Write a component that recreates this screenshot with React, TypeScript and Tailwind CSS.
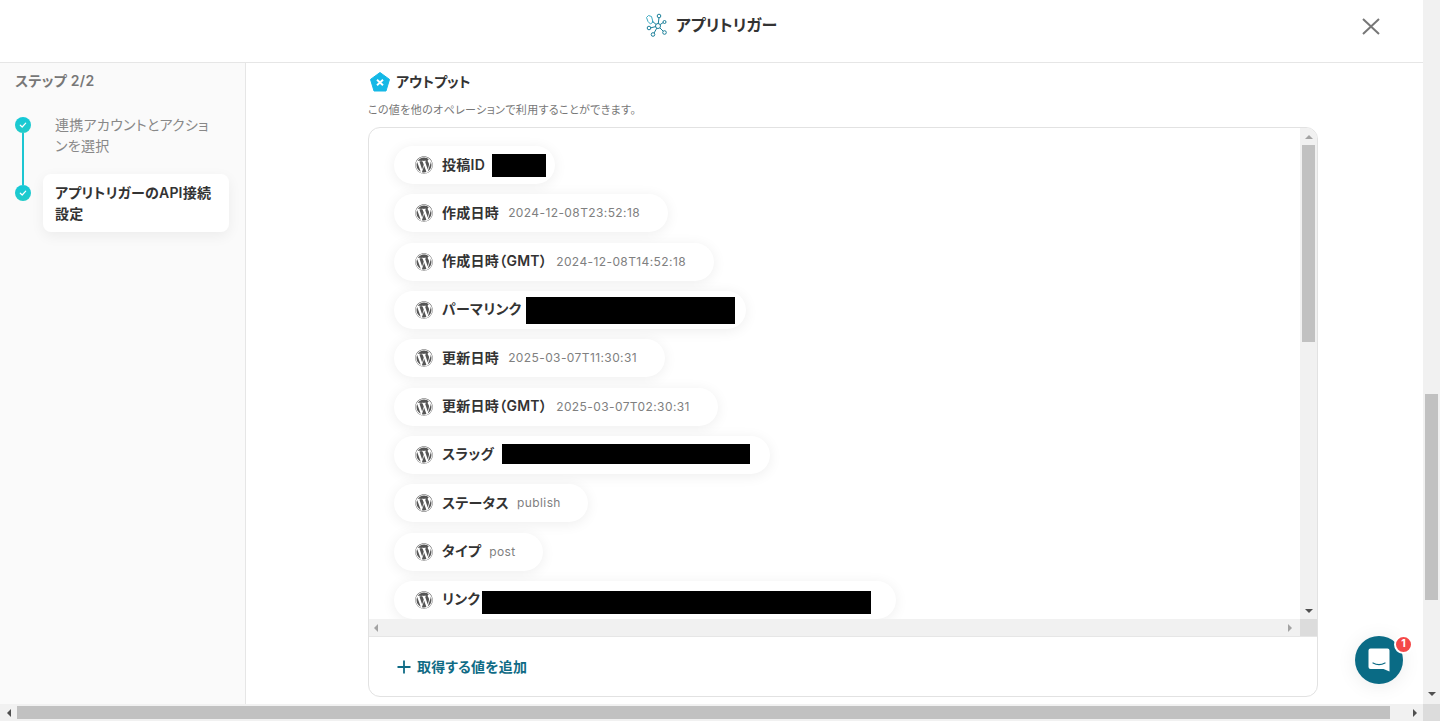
import React from "react";
import { FaWordpress } from "react-icons/fa";

interface OutputRow {
  label: string;
  value?: string;
  gap: string;
  pill: string;
  block?: string;
}

const rows: OutputRow[] = [
  { label: "投稿ID", gap: "ml-[7px]", pill: "w-[161px]", block: "w-[54px] h-[23px]" },
  { label: "作成日時", value: "2024-12-08T23:52:18", gap: "ml-[9px]", pill: "w-[274px]" },
  { label: "作成日時（GMT）", value: "2024-12-08T14:52:18", gap: "ml-[9px]", pill: "w-[320px]" },
  { label: "パーマリンク", gap: "ml-[4.5px]", pill: "w-[352px]", block: "w-[209px] h-[27px] mt-[2px]" },
  { label: "更新日時", value: "2025-03-07T11:30:31", gap: "ml-[9px]", pill: "w-[271px]" },
  { label: "更新日時（GMT）", value: "2025-03-07T02:30:31", gap: "ml-[9px]", pill: "w-[324px]" },
  { label: "スラッグ", gap: "ml-[8px]", pill: "w-[376px]", block: "w-[248px] h-[20px] -mt-[2px]" },
  { label: "ステータス", value: "publish", gap: "ml-[8px]", pill: "w-[194px]" },
  { label: "タイプ", value: "post", gap: "ml-[8px]", pill: "w-[149px]" },
  { label: "リンク", gap: "ml-[2px]", pill: "w-[502px]", block: "w-[389px] h-[23px] mt-[5px]" },
];

function CheckDot() {
  return (
    <div className="w-4 h-4 rounded-full bg-gradient-to-b from-[#14c8d8] to-[#22cbc8] flex items-center justify-center shrink-0">
      <svg width="10" height="10" viewBox="0 0 10 10" fill="none">
        <path d="M2.3 5.2 4.2 7l3.5-3.8" stroke="#fff" strokeWidth="1.2" strokeLinecap="round" strokeLinejoin="round" />
      </svg>
    </div>
  );
}

function TriggerIcon() {
  return (
    <svg width="24" height="24" viewBox="0 0 24 24" fill="none" stroke="#1b7f99" strokeWidth="1">
      <path d="M14 13 8 8M14 13 15 4.500M14 13 20 9M14 13 20 19M14 13 9.500 21M14 13 6 15" />
      <path d="M2.500 4.500 4.500 2.500 7.500 3.500 9 9 6.500 11 4 8.500Z" stroke="#3aa9c2" />
      <circle cx="14" cy="13" r="2.500" fill="#fff" stroke="#1b7f99" />
      <circle cx="15" cy="3" r="1.800" fill="#fff" />
      <circle cx="20.500" cy="9" r="1.500" fill="#fff" />
      <circle cx="20.500" cy="19.500" r="1.800" fill="#fff" />
      <circle cx="9" cy="21.500" r="1.800" fill="#fff" />
      <circle cx="5" cy="15" r="1.800" fill="#fff" />
    </svg>
  );
}

function OutputPill({ row }: { row: OutputRow }) {
  return (
    <div className={`${row.pill} h-[38px] shrink-0 rounded-full bg-white shadow-[0_2px_14px_rgba(0,0,0,0.07)] flex items-center pl-[21px]`}>
      <FaWordpress className="w-[18px] h-[18px] text-[#555] shrink-0" />
      <span className="ml-[9px] -mt-[2px] text-[14px] tracking-[0.28px] font-semibold text-[#333] whitespace-nowrap">{row.label}</span>
      {row.value && (
        <span className={`${row.gap} text-[12px] tracking-[0.4px] text-[#808080] whitespace-nowrap`}>{row.value}</span>
      )}
      {row.block && <div className={`${row.gap} ${row.block} bg-black shrink-0`} />}
    </div>
  );
}

export default function App() {
  return (
    <div className="relative w-[1440px] h-[721px] overflow-hidden bg-white font-['Inter','Noto_Sans_CJK_JP',sans-serif] [font-feature-settings:'palt'] flex flex-col">
      <div className="flex flex-1 min-h-0">
        <div className="w-[1423px] flex flex-col">
          {/* header */}
          <header className="h-[63px] shrink-0 border-b border-[#e6e6e6] flex items-center relative">
            <div className="w-full flex justify-center items-center gap-[8px] pb-[12px] pr-[2px]">
              <TriggerIcon />
              <span className="text-[16px] font-semibold text-[#333]">アプリトリガー</span>
            </div>
            <button className="absolute left-[1362px] top-[18px]">
              <svg width="18" height="17" viewBox="0 0 18 17" fill="none" className="block">
                <path d="M1 1 17 16M17 1 1 16" stroke="#777" strokeWidth="2" />
              </svg>
            </button>
          </header>

          <div className="flex flex-1 min-h-0">
            {/* sidebar */}
            <aside className="w-[246px] shrink-0 bg-[#fafafa] border-r border-[#e6e6e6] pl-[15px] pt-[8px]">
              <p className="text-[14px] tracking-[0.28px] font-semibold text-[#777] leading-[20px]">ステップ 2/2</p>
              <div className="flex mt-[26px]">
                <div className="w-4 flex flex-col items-center">
                  <CheckDot />
                  <div className="w-[2px] h-[52px] bg-[#1cc6d2]" />
                  <CheckDot />
                </div>
                <div className="ml-[12px] -mt-[2px]">
                  <p className="pl-[12px] w-[172px] text-[14px] tracking-[0.28px] leading-[20.5px] text-[#888]">
                    連携アカウントとアクションを選択
                  </p>
                  <div className="mt-[18px] w-[186px] h-[58px] bg-white rounded-[8px] shadow-[0_4px_14px_rgba(0,0,0,0.06)] px-[12px] py-[9px] text-[14px] tracking-[0.2px] leading-[20.5px] font-semibold text-[#333]">
                    アプリトリガーのAPI接続設定
                  </div>
                </div>
              </div>
            </aside>

            {/* main */}
            <main className="flex-1 min-w-0 pl-[122px] pt-[9px]">
              <div className="flex items-center h-[20px]">
                <svg width="20" height="20" viewBox="0 0 20 20" className="ml-[2px]">
                  <path d="M10 0.500 19.500 7.400 16 19H4L0.500 7.400Z" fill="#14b8e6" stroke="#14b8e6" strokeLinejoin="round" />
                  <path d="M7 7.700 13 13.300M13 7.700 7 13.300" stroke="#fff" strokeWidth="1.900" />
                </svg>
                <span className="ml-[6px] -mt-[2px] text-[14px] font-semibold text-[#333]">アウトプット</span>
              </div>
              <p className="mt-[10px] text-[11px] tracking-[0.36px] leading-[16px] text-[#777]">この値を他のオペレーションで利用することができます。</p>

              <section className="mt-[9px] w-[950px] h-[570px] border border-[#e2e2e2] rounded-[12px] overflow-hidden flex flex-col bg-white">
                <div className="flex h-[491px] shrink-0">
                  <div className="w-[932px] overflow-hidden pt-[18px] pl-[25px] flex flex-col gap-[10.33px]">
                    {rows.map((row) => (
                      <OutputPill key={row.label} row={row} />
                    ))}
                  </div>
                  <div className="w-[17px] bg-[#f1f1f1] flex flex-col items-center">
                    <div className="h-[17px] flex items-center justify-center">
                      <div className="border-x-[4px] border-x-transparent border-b-[4px] border-b-[#a3a3a3]" />
                    </div>
                    <div className="w-[13px] h-[197px] bg-[#c1c1c1]" />
                    <div className="flex-1" />
                    <div className="h-[17px] flex items-center justify-center">
                      <div className="border-x-[4px] border-x-transparent border-t-[4px] border-t-[#505050]" />
                    </div>
                  </div>
                </div>
                <div className="h-[17px] shrink-0 flex bg-[#f1f1f1]">
                  <div className="w-[932px] flex items-center justify-between px-[5px]">
                    <div className="border-y-[4px] border-y-transparent border-r-[4px] border-r-[#a3a3a3]" />
                    <div className="border-y-[4px] border-y-transparent border-l-[4px] border-l-[#a3a3a3] mr-[3px]" />
                  </div>
                  <div className="w-[17px] bg-[#dcdcdc]" />
                </div>
                <div className="flex-1 border-t border-[#e6e6e6] flex items-center pl-[28px] text-[#0f6b85]">
                  <svg width="14" height="14" viewBox="0 0 14 14" fill="none">
                    <path d="M7 0.500V13.500M0.500 7H13.500" stroke="#0f6b85" strokeWidth="1.800" />
                  </svg>
                  <span className="ml-[6px] text-[14px] tracking-[0.14px] font-semibold">取得する値を追加</span>
                </div>
              </section>
            </main>
          </div>
        </div>

        {/* page vertical scrollbar */}
        <div className="w-[17px] bg-[#f1f1f1] flex flex-col items-center">
          <div className="h-[394px]" />
          <div className="w-[13px] h-[206px] bg-[#c1c1c1]" />
          <div className="flex-1" />
          <div className="h-[20px] flex items-center justify-center">
            <div className="border-x-[4px] border-x-transparent border-t-[4px] border-t-[#505050]" />
          </div>
        </div>
      </div>

      {/* page horizontal scrollbar */}
      <div className="h-[17px] shrink-0 bg-[#f1f1f1] flex items-center">
        <div className="w-[17px] flex justify-center">
          <div className="border-y-[4px] border-y-transparent border-r-[4px] border-r-[#505050]" />
        </div>
        <div className="w-[1373px] h-[13px] bg-[#c1c1c1]" />
        <div className="ml-auto w-[17px] flex justify-center">
          <div className="border-y-[4px] border-y-transparent border-l-[4px] border-l-[#505050]" />
        </div>
        <div className="w-[17px] h-full bg-[#dcdcdc]" />
      </div>

      {/* chat launcher */}
      <div className="absolute left-[1355px] top-[636px] w-[48px] h-[48px] rounded-full bg-[#0a6b85] shadow-[0_2px_20px_rgba(0,0,0,0.08)] flex items-center justify-center">
        <svg width="24" height="24" viewBox="0 0 24 24" fill="none">
          <path d="M3.500 0.500h17a2 2 0 0 1 2 2v21l-6-2.500h-13a2 2 0 0 1-2-2v-16.500a2 2 0 0 1 2-2Z" fill="#fff" />
          <path d="M6 15c3.500 2 8.500 2 12 0" stroke="#0a6b85" strokeWidth="1.200" strokeLinecap="round" />
        </svg>
        <div className="absolute -top-[1px] -right-[10px] w-[19px] h-[19px] rounded-full bg-[#f44848] border-2 border-white flex items-center justify-center text-white text-[10.500px] font-bold leading-none">
          1
        </div>
      </div>
    </div>
  );
}
